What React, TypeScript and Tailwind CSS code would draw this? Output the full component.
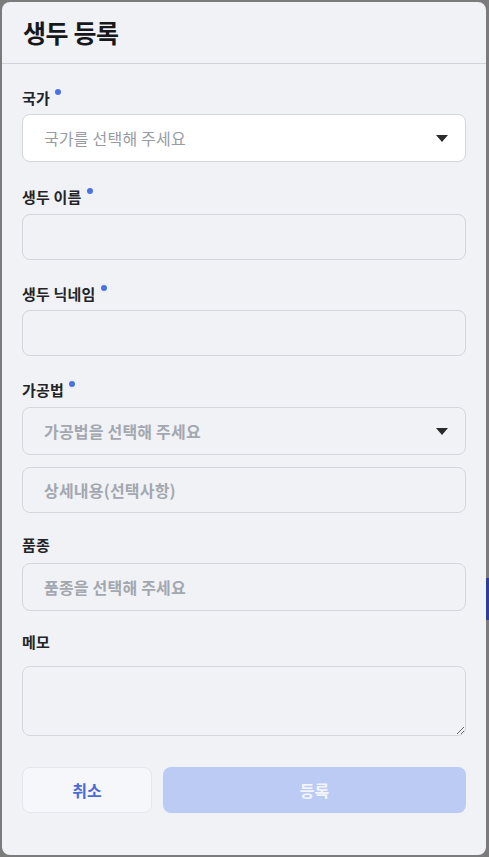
import React from "react";

const font = { fontFamily: '"Noto Sans CJK KR", "Noto Sans", sans-serif' };

function Dot() {
  return <span className="ml-[5px] inline-block h-[6px] w-[6px] -translate-y-[6px] rounded-full bg-[#4a72e8]" />;
}

function Label({ text, req }: { text: string; req?: boolean }) {
  return (
    <div className="flex h-5 items-center text-[15px] font-bold leading-5 tracking-[0.2px] text-[#222428]">
      <span>{text}</span>
      {req && <Dot />}
    </div>
  );
}

function Caret() {
  return (
    <svg width="12" height="7" viewBox="0 0 12 7" className="shrink-0">
      <path d="M0 0 L12 0 L6 7 Z" fill="#2b2b2b" />
    </svg>
  );
}

export default function App() {
  return (
    <div className="relative h-[857px] w-[489px] overflow-hidden bg-[#7b7b7b]" style={font}>
      <div className="absolute right-0 top-[578px] h-[42px] w-[3px] bg-[#2d3f8e]" />
      <div className="absolute left-[2px] top-[2px] flex h-[853px] w-[484px] flex-col rounded-lg bg-[#f0f2f6]">
        <div className="flex h-[62px] items-center border-b border-[#cfd2d8] px-[21px]">
          <h1 className="text-[25px] font-bold tracking-[-0.4px] text-[#16181c]">생두 등록</h1>
        </div>
        <div className="flex flex-col px-5 pt-6">
          <Label text="국가" req />
          <div className="mt-1.5 flex h-12 items-center justify-between rounded-lg border border-[#d3d6dc] bg-white pl-[21px] pr-[17px]">
            <span className="text-[16px] tracking-[0.2px] text-[#979ba3]">국가를 선택해 주세요</span>
            <Caret />
          </div>

          <div className="mt-[25px]">
            <Label text="생두 이름" req />
          </div>
          <div className="mt-[7px] h-[46px] rounded-lg border border-[#d3d6dc] bg-[#f0f2f6]" />

          <div className="mt-6">
            <Label text="생두 닉네임" req />
          </div>
          <div className="mt-1.5 h-[46px] rounded-lg border border-[#d3d6dc] bg-[#f0f2f6]" />

          <div className="mt-6">
            <Label text="가공법" req />
          </div>
          <div className="mt-[7px] flex h-12 items-center justify-between rounded-lg border border-[#d3d6dc] pl-[21px] pr-[17px]">
            <span className="text-[16px] font-semibold tracking-[0.2px] text-[#a3a7af]">가공법을 선택해 주세요</span>
            <Caret />
          </div>
          <div className="mt-3 flex h-[46px] items-center rounded-lg border border-[#d3d6dc] pl-[21px]">
            <span className="text-[16px] font-semibold tracking-[0.2px] text-[#a3a7af]">상세내용(선택사항)</span>
          </div>

          <div className="mt-[22px]">
            <Label text="품종" />
          </div>
          <div className="mt-2 flex h-12 items-center rounded-lg border border-[#d3d6dc] pl-[21px]">
            <span className="text-[16px] font-semibold tracking-[0.2px] text-[#a3a7af]">품종을 선택해 주세요</span>
          </div>

          <div className="mt-[21px]">
            <Label text="메모" />
          </div>
          <textarea className="mt-[14px] h-[70px] w-full rounded-lg border border-[#d3d6dc] bg-[#f0f2f6] outline-none" />

          <div className="mt-[31px] flex gap-[11px]">
            <button className="flex h-[46px] w-[130px] items-center justify-center rounded-lg border border-[#e3e6ec] bg-[#f5f7fb] text-[16px] font-bold text-[#4a6ad6]">
              취소
            </button>
            <button className="flex h-[46px] flex-1 items-center justify-center rounded-lg bg-[#bccbf4] text-[16px] font-bold text-[#f3f5fc]">
              등록
            </button>
          </div>
        </div>
      </div>
    </div>
  );
}
